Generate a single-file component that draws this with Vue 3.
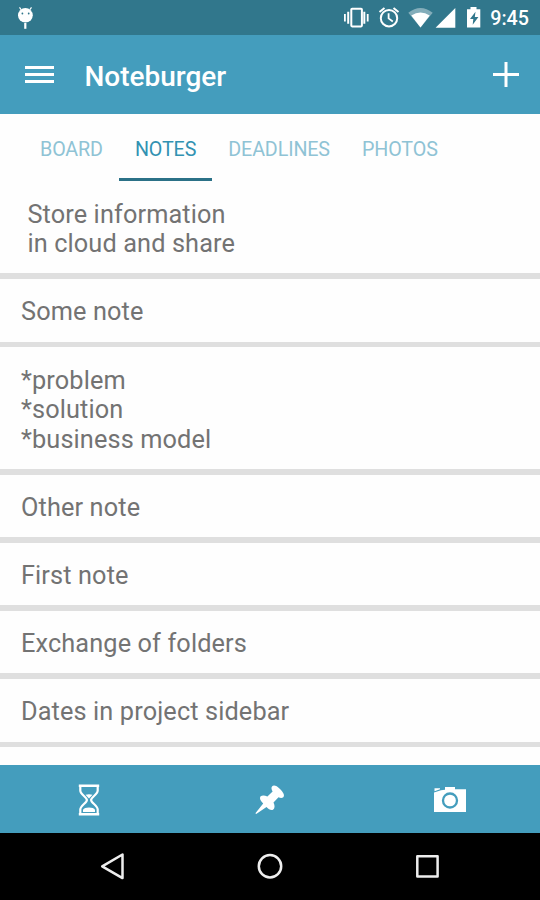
<template>
  <div class="screen">
    <div class="status">
      <svg class="status-icons" width="540" height="35" viewBox="0 0 540 35">
        <g fill="#fff">
          <path d="M19.5 7.4l1.8 2.4M31.5 7.4l-1.8 2.4" stroke="#fff" stroke-width="1.2" />
          <ellipse cx="25.4" cy="15.3" rx="7.4" ry="7.3" />
          <path d="M24.2 23h2.2v5.8h-2.2z" />
          <g fill="#31778c">
            <circle cx="22.4" cy="13.5" r="0.9" />
            <circle cx="28.7" cy="13.5" r="0.9" />
          </g>
          <path d="M344 14h1.8v7.5H344zM347.2 11.7h2v12h-2zM363.3 11.7h2v12h-2zM366.8 14h1.8v7.5h-1.8z" />
          <path d="M379.5 12l5-4M398.5 12l-5-4" stroke="#fff" stroke-width="2" />
          <path d="M408.3 12.7Q420.5 3.3 432.7 12.7L420.5 27.5z" opacity="0.4" />
          <path d="M411.3 15.5Q420.5 9.5 429.7 15.5L420.5 27.5z" />
          <path d="M455.3 8v19.7h-19.7z" />
          <path d="M467 9.2h3.5V7.1h6v2.1h3.8v18.4H467z" />
        </g>
        <g fill="none" stroke="#fff" stroke-width="2">
          <rect x="351.3" y="8.8" width="10.6" height="17.6" rx="0.8" />
          <circle cx="389" cy="18.2" r="8.2" />
          <path d="M388.6 13.2v5.2l4.2 3" stroke-width="1.8" />
        </g>
        <path d="M475.5 11.8l-5.5 7.2h3.3l-.6 5.7 5.7-7.8h-3.6z" fill="#31778c" />
      </svg>
      <span class="clock">9:45</span>
    </div>

    <header class="bar">
      <svg class="menu" width="29" height="18" viewBox="0 0 29 18">
        <path d="M0 1.5h29M0 8.5h29M0 15.5h29" stroke="#fff" stroke-width="3" />
      </svg>
      <h1 class="title">Noteburger</h1>
      <svg class="add" width="26" height="26" viewBox="0 0 26 26">
        <path d="M0 12.5h26M13 0v25" stroke="#fff" stroke-width="3" />
      </svg>
    </header>

    <nav class="tabs">
      <button
        v-for="tab in tabs"
        :key="tab"
        class="tab"
        :class="{ active: tab === activeTab }"
        @click="activeTab = tab"
      >
        {{ tab }}
      </button>
    </nav>

    <main class="notes">
      <div v-for="note in notes" :key="note.text" class="note" :class="{ inset: note.inset }">
        <p>{{ note.text }}</p>
        <div class="line"></div>
      </div>
    </main>

    <footer class="actions">
      <div class="action">
        <svg class="hourglass" width="22" height="32" viewBox="0 0 22 32">
          <path d="M.8 1.8h20.4M.8 30.2h20.4" stroke="#fff" stroke-width="2.4" />
          <path
            d="M2.3 2v4.5c0 4 6.600 6.500 6.600 9.500s-6.600 5.500-6.600 9.500V30M19.700 2v4.500c0 4-6.600 6.500-6.600 9.500s6.600 5.500 6.600 9.500V30"
            fill="none"
            stroke="#fff"
            stroke-width="2.2"
          />
          <path d="M7.5 10.7q3.5-1 7 0L11 14.5zM5 28v-2.3q1.5-2.2 6-2.2t6 2.2V28z" fill="#fff" />
        </svg>
      </div>
      <div class="action">
        <svg width="30" height="31" viewBox="0 0 30 31">
          <path
            d="M17 2.500C18.500.800 21.500 1.500 25 5c3.500 3.400 5 6.700 3.300 8.200-1.300 1-3 .8-4.800 0l-5 5.300c1.500 3.200 1.500 6-.5 7.200-2 .9-4.400-.5-6.500-2.700L1.200 30l-.8-.7 7.800-9.700c-2.700-2.500-4-5.200-2.800-7 1.600-1.600 4-1.500 7-.2l5.200-5c-1.200-2-1.500-3.800-.6-4.900z"
            fill="#fff"
          />
        </svg>
      </div>
      <div class="action">
        <svg width="32" height="25" viewBox="0 0 32 25">
          <path d="M0 5.500l7-2.300 4-.5V0h10v2.300h11V25H0z" fill="#fff" />
          <path d="M.5 1.200h5.500v1L.5 4.200z" fill="#fff" />
          <circle cx="16" cy="13.5" r="7" fill="none" stroke="#449dbd" stroke-width="2.3" />
        </svg>
      </div>
    </footer>

    <div class="system">
      <svg width="540" height="67" viewBox="0 0 540 67">
        <g fill="none" stroke="#eee" stroke-width="2.5" stroke-linejoin="round">
          <path d="M122.5 21.5v23.6L102.2 33.3z" />
          <circle cx="270" cy="33.3" r="11.2" />
          <rect x="417.3" y="23.2" width="20.3" height="20.3" />
        </g>
      </svg>
    </div>
  </div>
</template>

<script setup>
import { ref } from 'vue';

const tabs = ['BOARD', 'NOTES', 'DEADLINES', 'PHOTOS'];
const activeTab = ref('NOTES');

const notes = [
  { text: 'Store information\nin cloud and share', inset: true },
  { text: 'Some note' },
  { text: '*problem\n*solution\n*business model' },
  { text: 'Other note' },
  { text: 'First note' },
  { text: 'Exchange of folders' },
  { text: 'Dates in project sidebar' },
];
</script>

<style>
body {
  margin: 0;
}
</style>

<style scoped>
.screen {
  width: 540px;
  height: 900px;
  display: flex;
  flex-direction: column;
  overflow: hidden;
  background: #fefefe;
  font-family: Roboto, 'Liberation Sans', sans-serif;
}

svg {
  display: block;
}

.status {
  display: grid;
  flex: 0 0 35px;
  background: #31778c;
}

.status-icons,
.clock {
  grid-area: 1 / 1;
}

.clock {
  justify-self: end;
  padding: 7px 11px 0 0;
  color: #fff;
  font-size: 19.7px;
  font-weight: 500;
  line-height: 23px;
}

.bar {
  display: flex;
  align-items: center;
  flex: 0 0 79px;
  box-sizing: border-box;
  padding: 0 21px 0 25px;
  background: #449dbd;
}

.title {
  flex: 1;
  margin: 4px 0 0 30.4px;
  color: #fff;
  font-size: 28px;
  font-weight: 500;
  line-height: 33px;
}

.tabs {
  display: flex;
  flex: 0 0 67px;
  padding-left: 24px;
}

.tab {
  box-sizing: border-box;
  padding: 6px 16px 0;
  border: 0;
  border-bottom: 3px solid transparent;
  background: none;
  color: #8fc3d5;
  font: 400 19.7px/23px Roboto, 'Liberation Sans', sans-serif;
  letter-spacing: -0.12px;
}

.tab.active {
  border-color: #2b7187;
  color: #3292b2;
}

.notes {
  flex: 1;
  min-height: 0;
  overflow: hidden;
}

.note p {
  margin: 0;
  padding: 18.4px 21px 14.6px;
  color: #737373;
  font-size: 25.3px;
  line-height: 29.6px;
  letter-spacing: 0.12px;
  white-space: pre-line;
}

.note.inset p {
  padding: 18.5px 27.4px 14.7px;
}

.line {
  height: 5.6px;
  background: #dfdfdf;
}

.actions {
  display: flex;
  flex: 0 0 68px;
  background: #449dbd;
}

.action {
  display: flex;
  flex: 1;
  align-items: center;
  justify-content: center;
}

.hourglass {
  margin: 1px 2px 0 0;
}

.system {
  flex: 0 0 67px;
  background: #000;
}
</style>
